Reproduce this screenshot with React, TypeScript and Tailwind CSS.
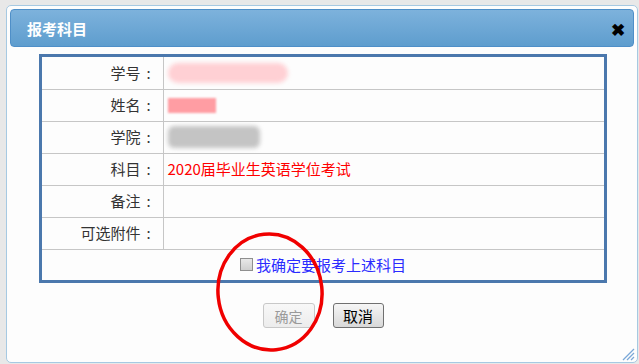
import React from 'react';

const rows: { label: string; value?: React.ReactNode }[] = [
  {
    label: '学号',
    value: (
      <div className="flex items-center">
        <div className="w-[120px] h-[20px] bg-[#ffd0d4] blur-[2px] rounded-full" />
      </div>
    ),
  },
  {
    label: '姓名',
    value: <div className="w-[48px] h-[15px] bg-[#ff9da3] blur-[1px]" />,
  },
  {
    label: '学院',
    value: <div className="w-[92px] h-[22px] bg-[#c4c4c4] blur-[2px] rounded-md" />,
  },
  {
    label: '科目',
    value: <span className="text-[#ff0000]">2020届毕业生英语学位考试</span>,
  },
  { label: '备注' },
  { label: '可选附件' },
];

export default function App() {
  return (
    <div
      className="w-[639px] h-[364px] bg-[#e8e8e8] pl-[6px] pt-[5px] relative overflow-hidden"
      style={{ fontFamily: '"Noto Sans CJK SC", "Noto Sans", sans-serif' }}
    >
      {/* dialog */}
      <div className="w-[632px] h-[358px] bg-[#fdfdfd] border border-[#a6c9e2] rounded-[5px] p-[3px] flex flex-col">
        {/* title bar */}
        <div className="h-[38px] rounded-[4px] border border-[#4f8fc8] bg-gradient-to-b from-[#7db2dc] to-[#5e9dce] flex items-center justify-between pl-[16px] pr-[8px]">
          <span className="text-white font-bold text-[15px] leading-none">报考科目</span>
          <span className="text-black font-bold text-[17px] leading-none">✖</span>
        </div>

        {/* table */}
        <div className="mt-[7px] ml-[29px] w-[568px] border-[3px] border-[#4b78ad]">
          <table className="w-full border-collapse text-[15px] text-[#333]">
            <tbody>
              {rows.map((r) => (
                <tr key={r.label} className="h-[32px] border-b border-[#c6c6c6]">
                  <td className="w-[121px] text-right pr-[6px] border-r border-[#c6c6c6]">
                    {r.label}
                    <span className="inline-block w-[16px] text-center">:</span>
                  </td>
                  <td className="pl-[4px]">{r.value}</td>
                </tr>
              ))}
              <tr className="h-[31px]">
                <td colSpan={2}>
                  <div className="flex items-center justify-center gap-[3px]">
                    <span className="w-[13px] h-[13px] border border-[#8f8f8f] bg-gradient-to-b from-[#e8e8e8] to-[#cfcfcf] inline-block" />
                    <span className="text-[#2b2bff]">我确定要报考上述科目</span>
                  </div>
                </td>
              </tr>
            </tbody>
          </table>
        </div>

        {/* buttons */}
        <div className="mt-[20px] flex justify-center gap-[18px] pl-[2px]">
          <button className="w-[52px] h-[25px] rounded-[3px] border border-[#c8c8c8] bg-gradient-to-b from-[#f8f8f8] to-[#ececec] text-[14px] text-[#9a9a9a] leading-none">
            确定
          </button>
          <button className="w-[51px] h-[25px] rounded-[3px] border border-[#707070] bg-gradient-to-b from-[#f6f6f6] to-[#d8d8d8] text-[15px] text-black leading-none">
            取消
          </button>
        </div>
      </div>

      {/* resize grip */}
      <svg className="absolute left-[621px] top-[347px]" width="14" height="14" viewBox="0 0 14 14">
        <path d="M13 2 L2 13 M13 6 L6 13 M13 10 L10 13" stroke="#7aa8d8" strokeWidth="1.3" />
      </svg>

      {/* red annotation */}
      <svg className="absolute left-[212px] top-[229px] pointer-events-none" width="118" height="128" viewBox="0 0 118 128">
        <ellipse cx="58" cy="63" rx="52" ry="58" fill="none" stroke="#f00000" strokeWidth="3.5" transform="rotate(-6 58 63)" />
      </svg>
    </div>
  );
}
